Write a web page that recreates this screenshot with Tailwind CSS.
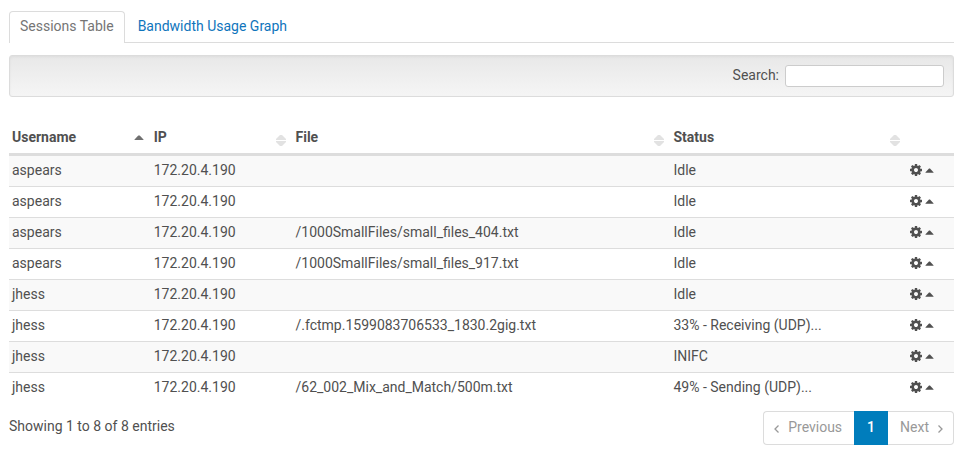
<!DOCTYPE html>
<html lang="en">
<head>
    <meta charset="UTF-8">
    <meta name="viewport" content="width=device-width, initial-scale=1.0">
    <title>Sessions</title>
    <script src="https://cdn.jsdelivr.net/npm/@tailwindcss/browser@4"></script>
</head>
<body class="bg-white pl-[9px] pr-[18px] pt-[11px] font-[Roboto,sans-serif] text-sm text-[#505050]">
    <svg class="hidden">
        <symbol id="sort" viewBox="0 0 10 12">
            <path d="M0 5V4L4 0h2l4 4v1zM0 6h10v1l-4 4H4L0 7z" fill="#e2e2e2" />
        </symbol>
        <symbol id="sort-asc" viewBox="0 0 10 12">
            <path d="M.5 5V4.400L4.300.500h1.400L9.500 4.400V5z" fill="#707070" />
        </symbol>
        <symbol id="gear" viewBox="0 0 1536 1536">
            <path fill="currentColor" d="M1024 768q0-106-75-181t-181-75-181 75-75 181 75 181 181 75 181-75 75-181zm512-109v222q0 12-8 23t-20 13l-185 28q-19 54-39 91 35 50 107 138 10 12 10 25t-9 23q-27 37-99 108t-94 71q-12 0-26-9l-138-108q-44 23-91 38-16 136-29 186-7 28-36 28H657q-14 0-24.500-8.500T621 1506l-28-184q-49-16-90-37l-141 107q-10 9-25 9-14 0-25-11-126-114-165-168-7-10-7-23 0-12 8-23 15-21 51-66.500t54-70.500q-27-50-41-99L29 913q-13-2-21-12.500T0 877V655q0-12 8-23t19-13l186-28q14-46 39-92-40-57-107-138-10-12-10-24 0-10 9-23 26-36 98.500-107.500T337 135q13 0 26 10l138 107q44-23 91-38 16-136 29-186 7-28 36-28h222q14 0 24.500 8.500T915 30l28 184q49 16 90 37l142-107q9-9 24-9 13 0 25 10 129 119 165 170 7 8 7 22 0 12-8 23-15 21-51 66.500t-54 70.500q26 50 41 98l183 28q13 2 21 12.500t8 23.500z" />
        </symbol>
    </svg>

    <nav class="flex gap-px border-b border-[#dcdcdc]">
        <a href="#sessions" class="-mb-px rounded-t border border-b-0 border-[#dcdcdc] bg-white px-2.5 pt-1 pb-[7px] leading-5 text-[#757575]">Sessions Table</a>
        <a href="#bandwidth" class="px-3 pt-[5px] pb-1.5 leading-5 text-[#0f75bc]">Bandwidth Usage Graph</a>
    </nav>

    <div class="mt-3 flex items-center justify-end gap-1.5 rounded-[3px] border border-[#dcdcdc] bg-linear-to-b from-[#e8e8e8] to-[#f5f5f5] px-[9px] py-[9px] shadow-[inset_0_1px_3px_rgba(0,0,0,0.05)]">
        <label for="search" class="pb-0.5 leading-5">Search:</label>
        <input id="search" type="search" class="h-[22px] w-[159px] rounded-[3px] border border-[#cccccc] bg-white px-1.5 outline-none">
    </div>

    <table class="mt-[26px] w-full table-fixed border-separate border-spacing-0 text-left">
        <thead>
            <tr>
                <th class="w-[15%] border-b-3 border-[#dddddd] p-0">
                    <button class="flex w-full items-center justify-between pt-1 pr-[7px] pb-1.5 pl-[3px] leading-5 font-bold">Username<svg class="mt-2 h-3 w-2.5"><use href="#sort-asc" /></svg></button>
                </th>
                <th class="w-[15%] border-b-3 border-[#dddddd] p-0">
                    <button class="flex w-full items-center justify-between pt-1 pr-[7px] pb-1.5 pl-[3px] leading-5 font-bold">IP<svg class="mt-2 h-3 w-2.5"><use href="#sort" /></svg></button>
                </th>
                <th class="w-[40%] border-b-3 border-[#dddddd] p-0">
                    <button class="flex w-full items-center justify-between pt-1 pr-[7px] pb-1.5 pl-[3px] leading-5 font-bold">File<svg class="mt-2 h-3 w-2.5"><use href="#sort" /></svg></button>
                </th>
                <th class="w-[25%] border-b-3 border-[#dddddd] p-0">
                    <button class="flex w-full items-center justify-between pt-1 pr-[7px] pb-1.5 pl-[3px] leading-5 font-bold">Status<svg class="mt-2 h-3 w-2.5"><use href="#sort" /></svg></button>
                </th>
                <th class="w-[5%] border-b-3 border-[#dddddd] p-0"></th>
            </tr>
        </thead>
        <tbody id="sessions"></tbody>
    </table>

    <div class="mt-2 flex items-start justify-between">
        <p class="pt-[5px] leading-5">Showing 1 to 8 of 8 entries</p>
        <nav class="flex leading-5 text-[#999999]">
            <a href="#previous" class="flex items-center gap-[9px] rounded-l border border-r-0 border-[#dcdcdc] pt-[5px] pr-3 pb-[7px] pl-2.5">
                <svg class="mt-1 h-2 w-[5px]" viewBox="0 0 5 8" fill="none" stroke="currentColor" stroke-width="1.300"><path d="M4.500.500 1 4l3.500 3.500" /></svg>
                Previous
            </a>
            <a href="#1" class="bg-[#007dbc] px-[13px] pt-1.5 pb-2 font-medium text-white">1</a>
            <a href="#next" class="flex items-center gap-[9px] rounded-r border border-l-0 border-[#dcdcdc] pt-[5px] pr-2.5 pb-[7px] pl-3">
                Next
                <svg class="mt-1 h-2 w-[5px]" viewBox="0 0 5 8" fill="none" stroke="currentColor" stroke-width="1.300"><path d="M.500.500 4 4 .500 7.500" /></svg>
            </a>
        </nav>
    </div>

    <script>
        const sessions = [
            ['aspears', '172.20.4.190', '', 'Idle'],
            ['aspears', '172.20.4.190', '', 'Idle'],
            ['aspears', '172.20.4.190', '/1000SmallFiles/small_files_404.txt', 'Idle'],
            ['aspears', '172.20.4.190', '/1000SmallFiles/small_files_917.txt', 'Idle'],
            ['jhess', '172.20.4.190', '', 'Idle'],
            ['jhess', '172.20.4.190', '/.fctmp.1599083706533_1830.2gig.txt', '33% - Receiving (UDP)...'],
            ['jhess', '172.20.4.190', '', 'INIFC'],
            ['jhess', '172.20.4.190', '/62_002_Mix_and_Match/500m.txt', '49% - Sending (UDP)...'],
        ];

        document.getElementById('sessions').innerHTML = sessions.map(row => `
            <tr class="group odd:bg-[#f9f9f9]">
                ${row.map(cell => `<td class="border-b border-[#dddddd] px-[3px] pt-1 pb-1.5 leading-5 group-last:border-b-0">${cell}</td>`).join('')}
                <td class="border-b border-[#dddddd] px-[3px] pt-1 pb-1.5 group-last:border-b-0">
                    <button class="flex h-5 items-center gap-[3px]" aria-label="Session actions">
                        <svg class="size-3"><use href="#gear" /></svg>
                        <svg class="mt-px h-[5px] w-[9px]" viewBox="0 0 9 5"><path d="M.5 4.700V4.200L4 .5h1l3.500 3.700v.5z" fill="currentColor" /></svg>
                    </button>
                </td>
            </tr>
        `).join('');
    </script>
</body>
</html>
